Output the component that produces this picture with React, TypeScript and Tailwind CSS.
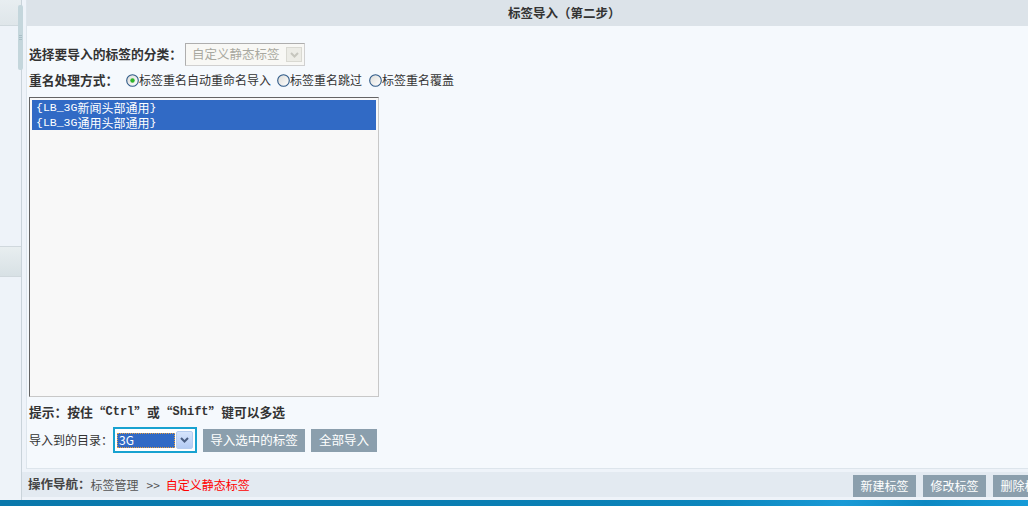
import React from "react";

const Radio = ({ checked }: { checked?: boolean }) => (
  <svg width="13" height="13" viewBox="0 0 13 13" className="shrink-0">
    <defs>
      <linearGradient id={checked ? "rg1" : "rg0"} x1="0" y1="0" x2="1" y2="1">
        <stop offset="0" stopColor="#dcdcd8" />
        <stop offset="1" stopColor="#ffffff" />
      </linearGradient>
    </defs>
    <circle cx="6.5" cy="6.5" r="5.8" fill={`url(#${checked ? "rg1" : "rg0"})`} stroke="#2f5a88" strokeWidth="1.1" />
    {checked && <circle cx="6.5" cy="6.5" r="2.2" fill="#2fb52a" />}
  </svg>
);

const Chevron = ({ color }: { color: string }) => (
  <svg width="9" height="6" viewBox="0 0 9 6">
    <path d="M1 1 L4.5 4.5 L8 1" fill="none" stroke={color} strokeWidth="2" />
  </svg>
);

export default function App() {
  return (
    <div className="w-[1028px] h-[506px] overflow-hidden flex flex-col bg-[#eef3f9] font-['Noto_Sans_CJK_SC','Noto_Sans',sans-serif] text-[12px] text-[#333] leading-none">
      <div className="flex h-[500px]">
        {/* sidebar */}
        <div className="relative w-[22px] shrink-0 border-r border-[#c9d3da] bg-[#eef3f9] flex flex-col">
          <div className="h-[26px] border-b border-[#d0d9de] bg-gradient-to-b from-[#e8eef1] to-[#dfe6ea]" />
          <div className="h-[220px]" />
          <div className="h-[31px] border-y border-[#d0d8dd] bg-gradient-to-b from-[#e8eef0] to-[#d8e1e5]" />
          <div className="absolute left-[18px] top-[5px] w-[5px] h-[65px] rounded-[2px] bg-[#c4d6dc] flex flex-col items-center justify-center gap-[1px]">
            <div className="w-[3px] h-[1px] bg-[#a9bec6]" />
            <div className="w-[3px] h-[1px] bg-[#a9bec6]" />
            <div className="w-[3px] h-[1px] bg-[#a9bec6]" />
          </div>
        </div>
        {/* right area */}
        <div className="flex-1 flex flex-col min-w-0">
          <div className="ml-[4px] h-[469px] border-l border-b border-[#dde5ec] flex flex-col bg-[#f5f9fd]">
            <div className="h-[26px] bg-[#dce3e9] flex items-center pl-[481px] font-bold text-[12.5px] text-[#333]">
              标签导入（第二步）
            </div>
            <div className="flex-1 pl-[2px] flex flex-col">
              {/* row 1 */}
              <div className="mt-[17px] flex items-center h-[23px]">
                <span className="font-bold text-[12.75px] w-[156px]">选择要导入的标签的分类：</span>
                <div className="w-[120px] h-[23px] border border-[#aeaeae] border-r-[#d0d0d0] border-b-[#d0d0d0] bg-[#f8f8f5] flex items-center pl-[6px] pr-[2px] justify-between">
                  <span className="text-[#a8a8a0] text-[12.5px]">自定义静态标签</span>
                  <div className="w-[16px] h-[15px] bg-[#ecece6] border border-[#d9d9d2] flex items-center justify-center">
                    <Chevron color="#c6c6be" />
                  </div>
                </div>
              </div>
              {/* row 2 */}
              <div className="mt-[5px] flex items-center h-[18px]">
                <span className="font-bold text-[12.75px] w-[97px]">重名处理方式：</span>
                <Radio checked />
                <span className="w-[138px]">标签重名自动重命名导入</span>
                <Radio />
                <span className="w-[79px]">标签重名跳过</span>
                <Radio />
                <span>标签重名覆盖</span>
              </div>
              {/* listbox */}
              <div className="mt-[8px] w-[350px] h-[300px] border border-[#646464] border-r-[#c8c8c8] border-b-[#c8c8c8] bg-[#f8f8f8] pt-[2px] px-[2px]">
                <div className="bg-[#316ac5] text-white">
                  <div className="h-[15px] flex items-center pl-[4px]">
                    <span className="font-['Liberation_Mono',monospace] text-[11.5px]">{"{LB_3G"}</span>
                    <span>新闻头部通用</span>
                    <span className="font-['Liberation_Mono',monospace] text-[11.5px]">{"}"}</span>
                  </div>
                  <div className="h-[15px] flex items-center pl-[4px]">
                    <span className="font-['Liberation_Mono',monospace] text-[11.5px]">{"{LB_3G"}</span>
                    <span>通用头部通用</span>
                    <span className="font-['Liberation_Mono',monospace] text-[11.5px]">{"}"}</span>
                  </div>
                </div>
              </div>
              {/* hint */}
              <div className="mt-[8px] h-[14px] flex items-center font-bold text-[12.75px]">
                提示：按住“<span className="font-['Liberation_Mono',monospace] text-[12px]">Ctrl</span>”或“<span className="font-['Liberation_Mono',monospace] text-[12px]">Shift</span>”键可以多选
              </div>
              {/* row 4 */}
              <div className="mt-[8px] flex items-center h-[26px]">
                <span className="w-[84px]">导入到的目录：</span>
                <div className="w-[84px] h-[26px] border-[2px] border-[#18a2d0] bg-white flex items-center pl-[2px] gap-[1px]">
                  <div className="w-[58px] h-[15px] bg-[#316ac5] border border-dotted border-[#e8a040] text-white flex items-center pl-[1px]">3G</div>
                  <div className="w-[17px] h-[18px] rounded-[2px] border border-[#b6cdf0] bg-gradient-to-b from-[#d6e4fc] to-[#b4cbf4] flex items-center justify-center">
                    <Chevron color="#4a5e82" />
                  </div>
                </div>
                <div className="ml-[6px] w-[102px] h-[23px] bg-[#8b9fad] text-white text-[12.5px] flex items-center justify-center">导入选中的标签</div>
                <div className="ml-[6px] w-[66px] h-[23px] bg-[#8b9fad] text-white text-[12.5px] flex items-center justify-center">全部导入</div>
              </div>
            </div>
          </div>
          <div className="h-[3px]" />
          {/* nav bar */}
          <div className="h-[25px] bg-[#e3eaf1] flex items-center overflow-hidden">
            <span className="ml-[6px] font-bold text-[12.5px] text-[#444]">操作导航：</span>
            <span className="text-[#555]">标签管理</span>
            <span className="ml-[8px] text-[#555]">&gt;&gt;</span>
            <span className="ml-[6px] text-[#f00]">自定义静态标签</span>
            <div className="ml-auto mr-[-28px] flex gap-[7px] shrink-0 self-end">
              <div className="w-[63px] h-[22px] bg-[#8b9fad] text-white flex items-center justify-center">新建标签</div>
              <div className="w-[63px] h-[22px] bg-[#8b9fad] text-white flex items-center justify-center">修改标签</div>
              <div className="w-[63px] h-[22px] bg-[#8b9fad] text-white flex items-center justify-center">删除标签</div>
            </div>
          </div>
        </div>
      </div>
      <div className="h-[6px] bg-[linear-gradient(100deg,#0a78ab_0%,#0a7fb4_55%,#0c86bd_70%,#1a9ad6_82%,#0d88c2_90%,#169bd8_100%)]" />
    </div>
  );
}
